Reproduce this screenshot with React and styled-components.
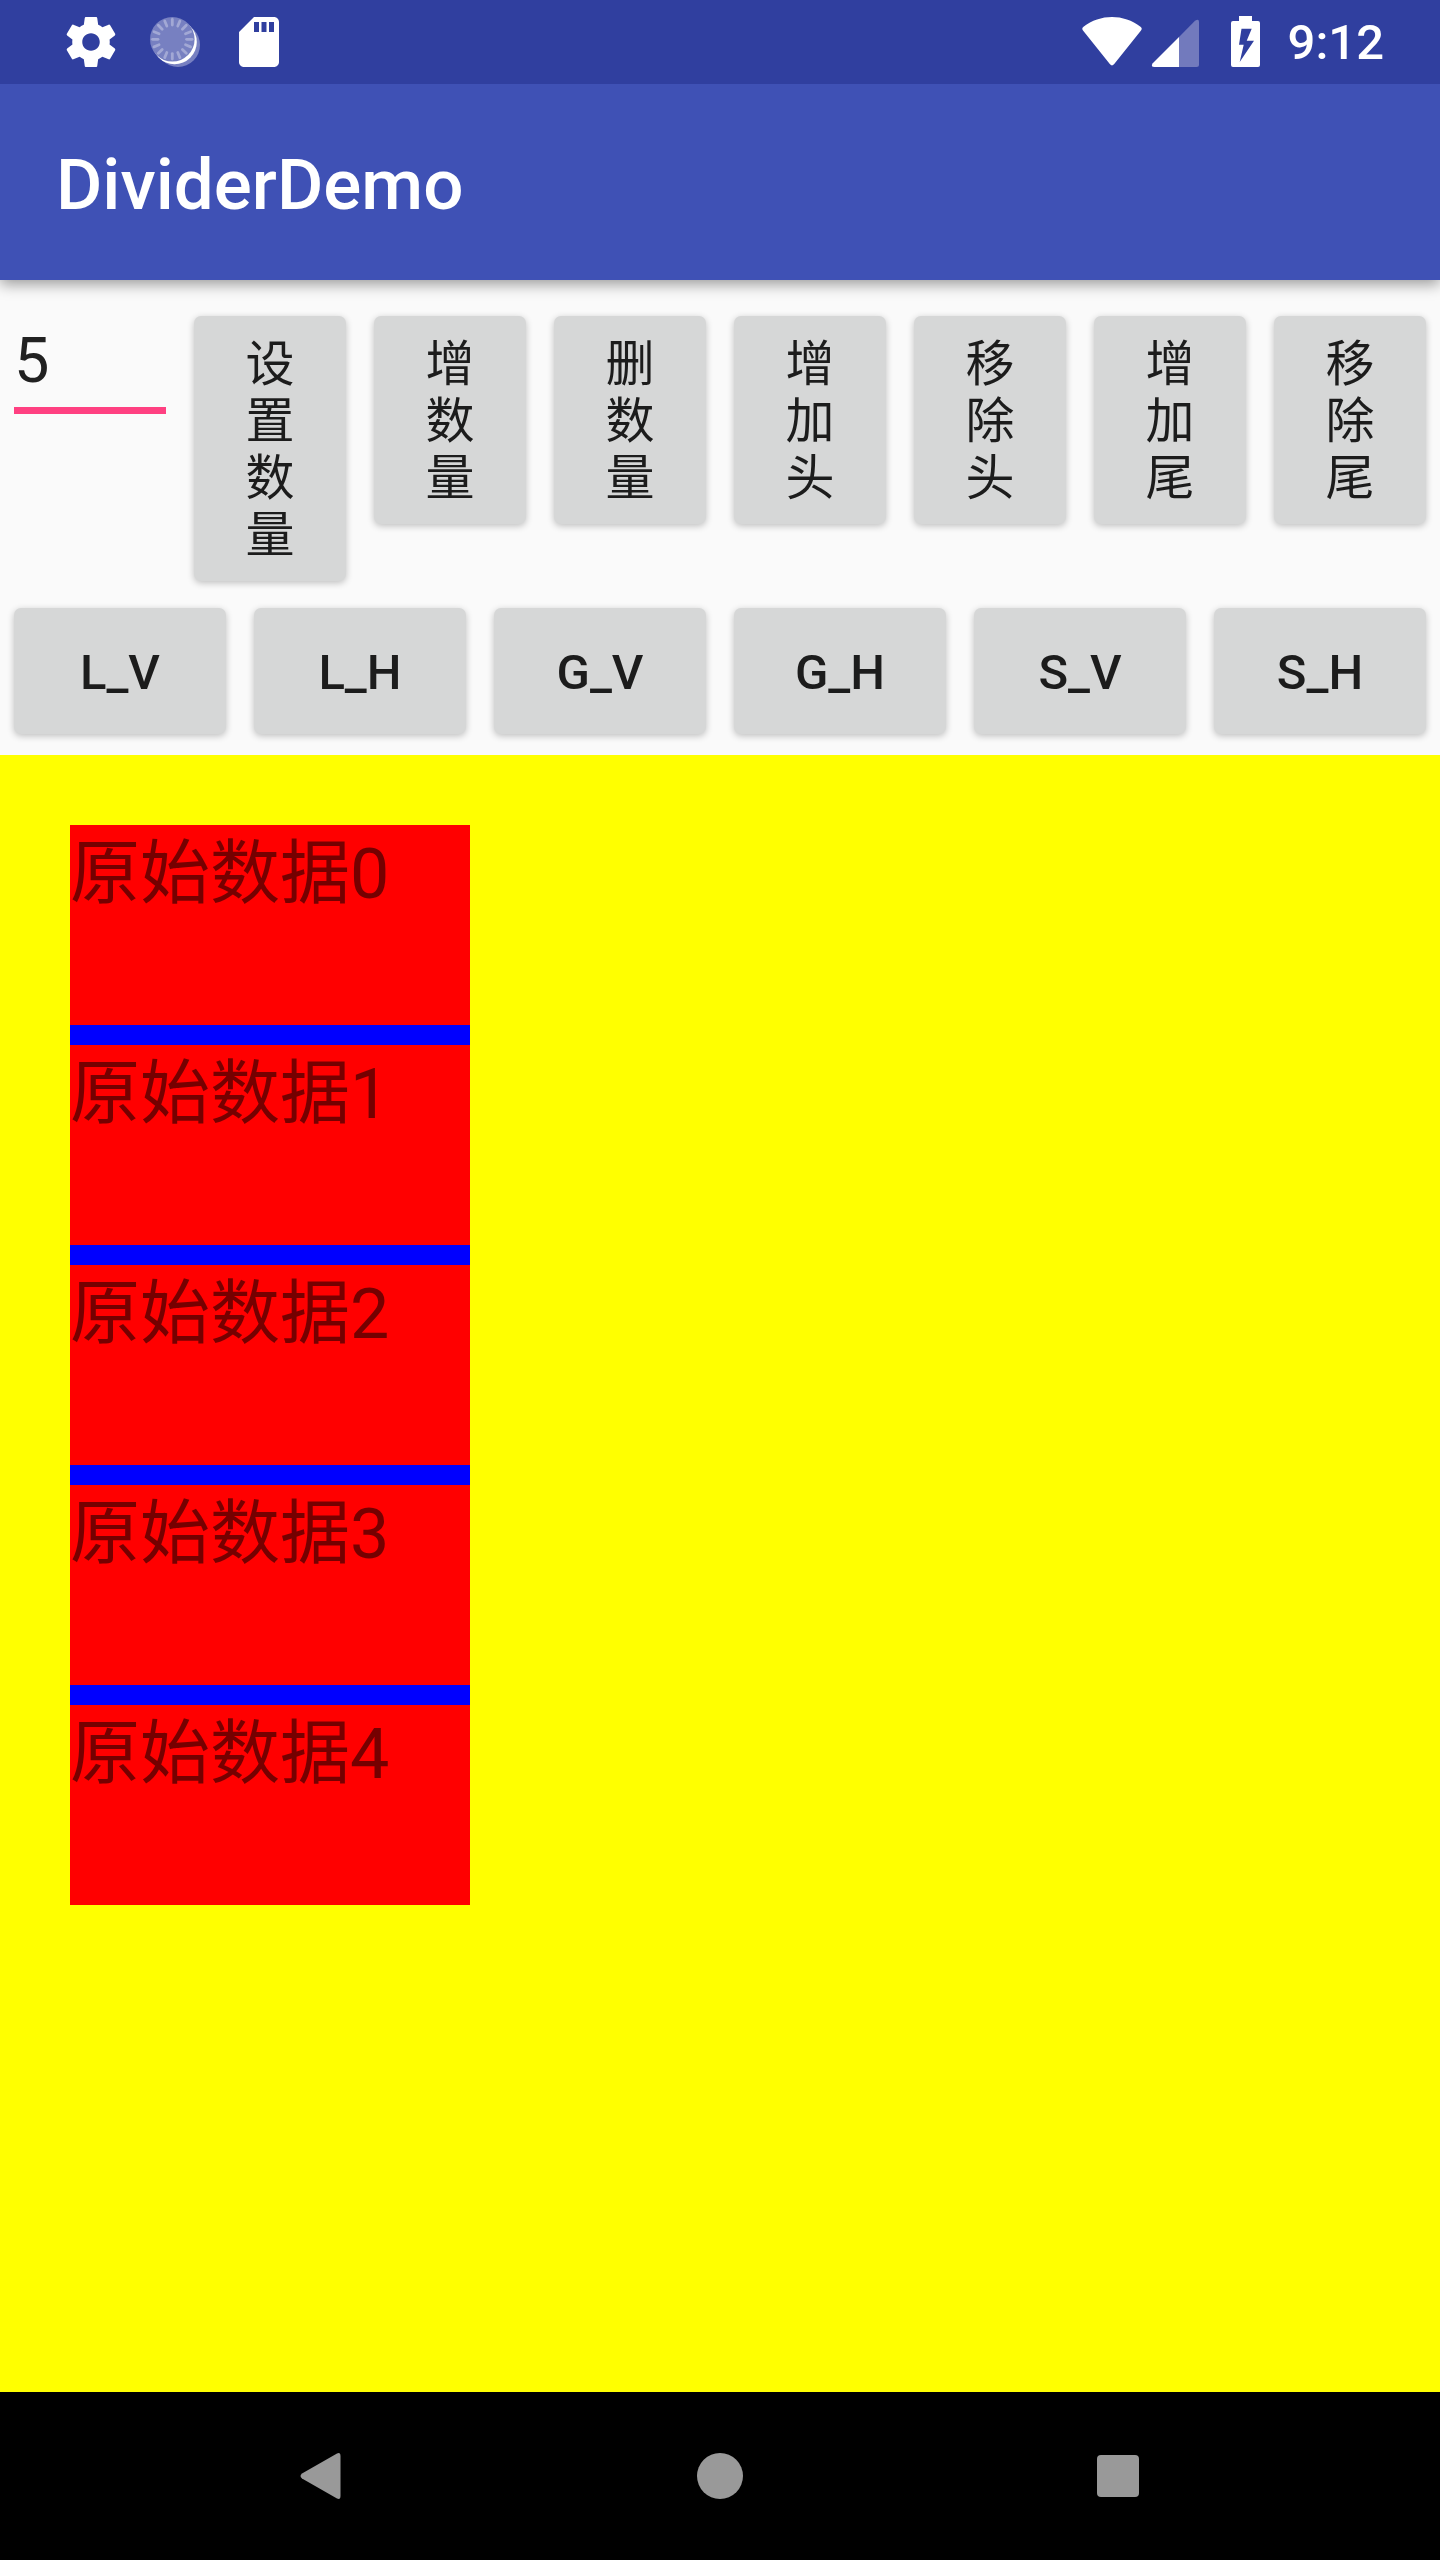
import React, { useState } from "react";
import styled, { createGlobalStyle } from "styled-components";

const GlobalStyle = createGlobalStyle`
  *, *::before, *::after { box-sizing: border-box; }
  body {
    margin: 0;
    background: #fafafa;
    font-family: Roboto, "Noto Sans CJK SC", sans-serif;
  }
`;

const Screen = styled.div`
  display: flex;
  flex-direction: column;
  min-height: 100vh;
`;

const StatusBar = styled.div`
  position: relative;
  z-index: 1;
  display: flex;
  align-items: center;
  justify-content: space-between;
  height: 84px;
  padding: 0 56px 0 61px;
  background: #303f9f;
  color: #fff;
`;

const IconGroup = styled.div`
  display: flex;
  align-items: center;
  gap: ${(p) => p.$gap}px;
`;

const StatusIcon = styled.svg`
  display: block;
  width: 60px;
  height: 60px;
  fill: #fff;
`;

const Clock = styled.time`
  margin-left: 14px;
  font-size: 49px;
  font-weight: 500;
  line-height: 57px;
`;

const AppBar = styled.header`
  position: relative;
  display: flex;
  align-items: center;
  height: 196px;
  padding: 6px 56px 0;
  background: #3f51b5;
  box-shadow: 0 4px 14px rgba(0, 0, 0, 0.4);
`;

const Title = styled.h1`
  margin: 0;
  color: #fff;
  font-size: 71px;
  font-weight: 500;
  line-height: 82px;
`;

const Controls = styled.section`
  display: flex;
  flex-direction: column;
  gap: 27px;
  padding: 36px 14px 21px;
`;

const ControlRow = styled.div`
  display: grid;
  grid-template-columns: repeat(${(p) => p.$columns}, minmax(0, 1fr));
  align-items: start;
  gap: 28px;
`;

const CountInput = styled.input`
  width: 100%;
  height: 98px;
  padding: 0 0 2px;
  border: 0;
  border-bottom: 7px solid #ff4081;
  border-radius: 0;
  outline: 0;
  background: transparent;
  color: #212121;
  font-family: inherit;
  font-size: 63px;
  line-height: 74px;
`;

const RaisedButton = styled.button`
  border: 0;
  border-radius: 7px;
  background: #d6d7d7;
  color: #1c1c1c;
  box-shadow: 0 2px 7px rgba(0, 0, 0, 0.24);
  font-family: inherit;
  font-size: 49px;
  line-height: 57px;
  text-align: center;
  cursor: pointer;
`;

const ActionButton = styled(RaisedButton)`
  padding: 20px 36px 17px;
  font-weight: 400;
`;

const LayoutButton = styled(RaisedButton)`
  height: 126px;
  padding: 2px 0 0;
  font-weight: 500;
`;

const ListArea = styled.main`
  flex: 1;
  padding: 70px;
  background: #ff0;
`;

const DataList = styled.ul`
  display: flex;
  flex-direction: column;
  gap: 20px;
  width: 400px;
  margin: 0;
  padding: 0;
  background: #00f;
  list-style: none;
`;

const DataItem = styled.li`
  height: 200px;
  padding-top: 8px;
  background: #f00;
  color: #750000;
  font-size: 70px;
  line-height: 82px;
`;

const NavBar = styled.nav`
  display: flex;
  align-items: center;
  justify-content: center;
  gap: 230px;
  height: 168px;
  background: #000;
`;

const NavButton = styled.button`
  display: flex;
  align-items: center;
  justify-content: center;
  width: 168px;
  height: 168px;
  padding: 0;
  border: 0;
  background: transparent;
  cursor: pointer;

  svg {
    width: 56px;
    height: 56px;
    fill: #999;
  }
`;

const actions = ["设置数量", "增数量", "删数量", "增加头", "移除头", "增加尾", "移除尾"];
const layouts = ["L_V", "L_H", "G_V", "G_H", "S_V", "S_H"];
const items = ["原始数据0", "原始数据1", "原始数据2", "原始数据3", "原始数据4"];
const ticks = Array.from({ length: 16 }, (_, i) => i * 22.5);

const GearIcon = () => (
  <StatusIcon viewBox="0 0 24 24" aria-hidden="true">
    <path d="M19.43 12.98c.04-.32.07-.64.07-.98s-.03-.66-.07-.98l2.11-1.65c.19-.15.24-.42.12-.64l-2-3.46c-.12-.22-.39-.3-.61-.22l-2.49 1c-.52-.4-1.08-.73-1.69-.98l-.38-2.65C14.46 2.18 14.25 2 14 2h-4c-.25 0-.46.18-.49.42l-.38 2.65c-.61.25-1.17.59-1.69.98l-2.49-1c-.23-.09-.49 0-.61.22l-2 3.46c-.13.22-.07.49.12.64l2.11 1.65c-.04.32-.07.65-.07.98s.03.66.07.98l-2.11 1.65c-.19.15-.24.42-.12.64l2 3.46c.12.22.39.3.61.22l2.49-1c.52.4 1.08.73 1.69.98l.38 2.65c.03.24.24.42.49.42h4c.25 0 .46-.18.49-.42l.38-2.65c.61-.25 1.17-.59 1.69-.98l2.49 1c.23.09.49 0 .61-.22l2-3.46c.12-.22.07-.49-.12-.64l-2.11-1.65zM12 15.5c-1.93 0-3.5-1.57-3.5-3.5s1.57-3.5 3.5-3.5 3.5 1.57 3.5 3.5-1.57 3.5-3.5 3.5z" />
  </StatusIcon>
);

const SpinnerIcon = () => (
  <StatusIcon viewBox="0 0 60 60" aria-hidden="true">
    <circle cx="33" cy="33" r="22" fill="#7780c1" />
    <circle cx="29.5" cy="30" r="22.3" />
    <circle cx="27.3" cy="27.3" r="22.3" fill="#7780c1" />
    <g stroke="#a2a8d5" strokeWidth="2.8" strokeLinecap="round">
      {ticks.map((angle) => (
        <line key={angle} x1="27.3" y1="13" x2="27.3" y2="7.5" transform={`rotate(${angle} 27.3 27.3)`} />
      ))}
    </g>
  </StatusIcon>
);

const SdCardIcon = () => (
  <StatusIcon viewBox="0 0 24 24" aria-hidden="true">
    <path d="M18 2h-8L4.02 8 4 20c0 1.1.9 2 2 2h12c1.1 0 2-.9 2-2V4c0-1.1-.9-2-2-2zm-6 6h-2V4h2v4zm3 0h-2V4h2v4zm3 0h-2V4h2v4z" />
  </StatusIcon>
);

const WifiIcon = () => (
  <StatusIcon viewBox="0 0 60 60" aria-hidden="true">
    <path d="M1 18.5Q-0.7 16.3 1.5 14.8C18 1.7 42 1.7 58.5 14.8Q60.7 16.3 59 18.5L32 52.3Q30 54.6 28 52.3Z" />
  </StatusIcon>
);

const SignalIcon = () => (
  <StatusIcon viewBox="0 0 60 60" aria-hidden="true">
    <path d="M33 25L49 8.800Q53 6 53 10V52.500Q53 55 50.500 55H33Z" fill="#727abd" />
    <path d="M33 25V55H8.500Q4.500 55 6.500 51.500Z" />
  </StatusIcon>
);

const BatteryIcon = () => (
  <StatusIcon viewBox="0 0 60 60" aria-hidden="true">
    <path
      fillRule="evenodd"
      d="M29 4H42V9H48Q50 9 50 11V53Q50 55 48 55H23Q21 55 21 53V11Q21 9 23 9H29ZM31.500 16.700H41.700L36.700 28.700H44L29.700 50L33.700 32.700H29Z"
    />
  </StatusIcon>
);

export default function App() {
  const [count, setCount] = useState("5");

  return (
    <>
      <GlobalStyle />
      <Screen>
        <StatusBar>
          <IconGroup $gap={24}>
            <GearIcon />
            <SpinnerIcon />
            <SdCardIcon />
          </IconGroup>
          <IconGroup $gap={4}>
            <WifiIcon />
            <SignalIcon />
            <BatteryIcon />
            <Clock>9:12</Clock>
          </IconGroup>
        </StatusBar>
        <AppBar>
          <Title>DividerDemo</Title>
        </AppBar>
        <Controls>
          <ControlRow $columns={8}>
            <CountInput aria-label="数量" value={count} onChange={(e) => setCount(e.target.value)} />
            {actions.map((label) => (
              <ActionButton key={label} type="button">
                {label}
              </ActionButton>
            ))}
          </ControlRow>
          <ControlRow $columns={6}>
            {layouts.map((label) => (
              <LayoutButton key={label} type="button">
                {label}
              </LayoutButton>
            ))}
          </ControlRow>
        </Controls>
        <ListArea>
          <DataList>
            {items.map((text) => (
              <DataItem key={text}>{text}</DataItem>
            ))}
          </DataList>
        </ListArea>
        <NavBar>
          <NavButton type="button" aria-label="Back">
            <svg viewBox="0 0 56 56">
              <path d="M8 25.500L43 5.500Q46.500 4 46.500 8V48Q46.500 52 43 50.500L8 30.500Q5 28 8 25.500Z" />
            </svg>
          </NavButton>
          <NavButton type="button" aria-label="Home">
            <svg viewBox="0 0 56 56">
              <circle cx="28" cy="28" r="23" />
            </svg>
          </NavButton>
          <NavButton type="button" aria-label="Overview">
            <svg viewBox="0 0 56 56">
              <rect x="7" y="7" width="42" height="42" rx="4" />
            </svg>
          </NavButton>
        </NavBar>
      </Screen>
    </>
  );
}
